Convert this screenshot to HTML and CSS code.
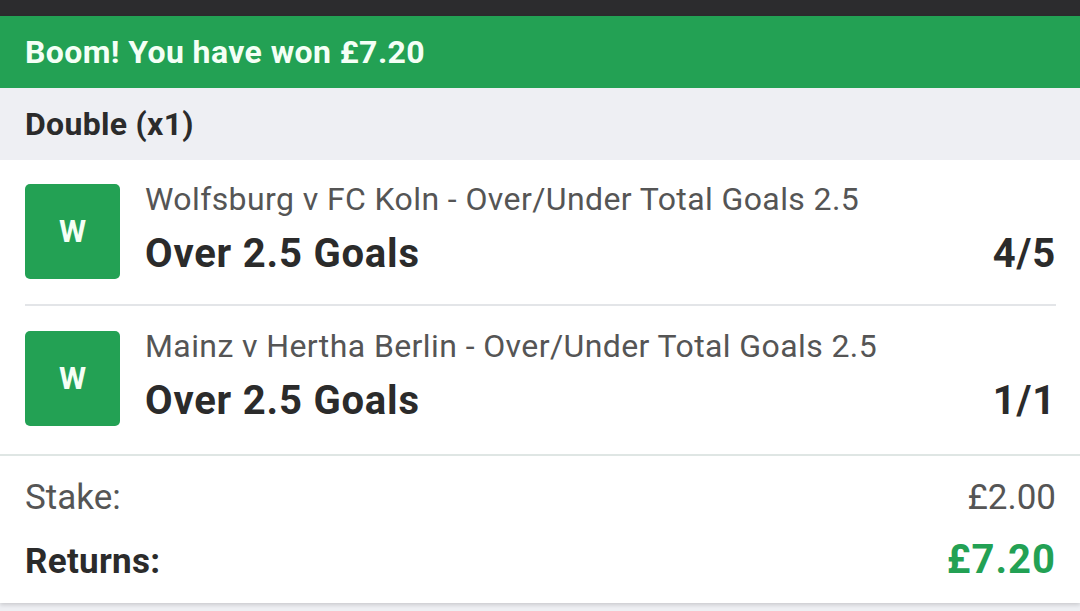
FILE: index.html
```html
<!DOCTYPE html>
<html lang="en">
<head>
  <meta charset="UTF-8">
  <title>Settled bet</title>
  <link rel="stylesheet" href="styles.css">
</head>
<body>
  <div class="status-bar"></div>

  <div class="bet-card">
    <div class="win-banner">Boom! You have won £7.20</div>
    <div class="bet-type">Double (x1)</div>

    <div class="selections">
      <div class="selection">
        <div class="result-badge">W</div>
        <div class="selection-info">
          <div class="market">Wolfsburg v FC Koln - Over/Under Total Goals 2.5</div>
          <div class="pick-row">
            <span class="pick">Over 2.5 Goals</span>
            <span class="odds">4/5</span>
          </div>
        </div>
      </div>
      <div class="selection">
        <div class="result-badge">W</div>
        <div class="selection-info">
          <div class="market">Mainz v Hertha Berlin - Over/Under Total Goals 2.5</div>
          <div class="pick-row">
            <span class="pick">Over 2.5 Goals</span>
            <span class="odds">1/1</span>
          </div>
        </div>
      </div>
    </div>

    <div class="totals">
      <div class="total-row">
        <span>Stake:</span>
        <span>£2.00</span>
      </div>
      <div class="total-row returns">
        <span>Returns:</span>
        <span class="returns-value">£7.20</span>
      </div>
    </div>
  </div>
</body>
</html>
```

FILE: styles.css
```css
:root {
  --win-green: #23a154;
  --text-dark: #2b2b2b;
  --text-muted: #555;
  --page-bg: #eeeff3;
}

body {
  margin: 0;
  font-family: Roboto, "Liberation Sans", sans-serif;
  background-color: var(--page-bg);
  color: var(--text-dark);
}

.status-bar {
  height: 16px;
  background-color: #2c2c2e;
}

.bet-card {
  background: #fff;
  box-shadow: 0 2px 4px rgba(0,0,0,0.15);
  margin-bottom: 8px;
}

.win-banner {
  height: 72px;
  display: flex;
  align-items: center;
  padding: 0 25px;
  background-color: var(--win-green);
  color: #f4fff6;
  font-size: 32px;
  font-weight: bold;
  letter-spacing: 0.4px;
}

.bet-type {
  height: 72px;
  display: flex;
  align-items: center;
  padding: 0 25px;
  background-color: var(--page-bg);
  font-size: 32px;
  font-weight: bold;
  letter-spacing: 0.3px;
}

.selections {
  padding: 0 24px 0 25px;
  border-bottom: 2px solid #dfe6e4;
}

.selection {
  display: flex;
  gap: 25px;
  padding: 25px 0;
}

.selection:first-child {
  padding-top: 24px;
}

.selection:last-child {
  padding-bottom: 28px;
}

.selection + .selection {
  border-top: 2px solid #e3e5e8;
}

.result-badge {
  flex: none;
  width: 95px;
  height: 95px;
  display: flex;
  align-items: center;
  justify-content: center;
  border-radius: 5px;
  background-color: var(--win-green);
  color: #f4fff6;
  font-size: 31px;
  font-weight: bold;
}

.selection-info {
  flex: 1;
}

.market {
  font-size: 32px;
  line-height: 30px;
  letter-spacing: 0.4px;
  color: var(--text-muted);
}

.pick-row {
  display: flex;
  justify-content: space-between;
  align-items: baseline;
  margin-top: 16px;
  font-size: 40px;
  line-height: 48px;
  font-weight: bold;
  letter-spacing: 0.8px;
}

.totals {
  padding: 21px 24px 20px 25px;
}

.total-row {
  display: flex;
  justify-content: space-between;
  align-items: baseline;
  font-size: 35px;
  line-height: 42px;
  color: var(--text-muted);
}

.total-row.returns {
  margin-top: 20px;
  font-weight: bold;
  letter-spacing: 0.3px;
  color: var(--text-dark);
}

.returns-value {
  font-size: 40px;
  letter-spacing: 1px;
  color: var(--win-green);
}
```
